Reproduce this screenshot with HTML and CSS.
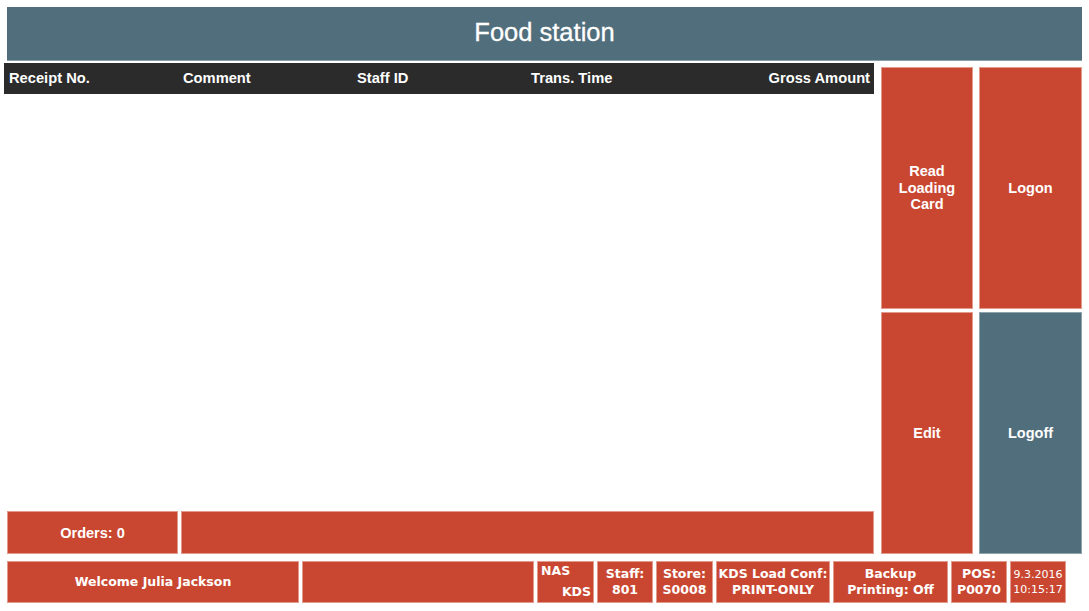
FILE: index.html
```html
<!DOCTYPE html>
<html>
<head>
<meta charset="utf-8">
<title>Food station</title>
<link rel="stylesheet" href="styles.css">
</head>
<body>
<div class="app">
  <header class="title-bar">Food station</header>
  <div class="main">
    <section class="left">
      <div class="table-head">
        <div class="col">Receipt No.</div>
        <div class="col">Comment</div>
        <div class="col">Staff ID</div>
        <div class="col">Trans. Time</div>
        <div class="col col-right">Gross Amount</div>
      </div>
      <div class="table-body"></div>
      <div class="orders-row">
        <div class="tile orders">Orders: 0</div>
        <div class="tile orders-bar"></div>
      </div>
    </section>
    <section class="actions">
      <div class="tile btn">Read<br>Loading<br>Card</div>
      <div class="tile btn">Logon</div>
      <div class="tile btn">Edit</div>
      <div class="tile btn blue">Logoff</div>
    </section>
  </div>
  <footer class="status">
    <div class="tile st w-welcome">Welcome Julia Jackson</div>
    <div class="tile st w-blank"></div>
    <div class="tile st w-nas"><span class="nas-top">NAS</span><span class="nas-bot">KDS</span></div>
    <div class="tile st w-56">Staff:<br>801</div>
    <div class="tile st w-57">Store:<br>S0008</div>
    <div class="tile st w-114">KDS Load Conf:<br>PRINT-ONLY</div>
    <div class="tile st w-115">Backup<br>Printing: Off</div>
    <div class="tile st w-56">POS:<br>P0070</div>
    <div class="tile st w-56 date">9.3.2016<br>10:15:17</div>
  </footer>
</div>
</body>
</html>
```

FILE: styles.css
```css
* { box-sizing: border-box; }
html, body {
  margin: 0;
  padding: 0;
  background: #ffffff;
  font-family: "Liberation Sans", Arial, sans-serif;
  color: #ffffff;
}
.app {
  width: 1089px;
  height: 611px;
  padding-top: 7px;
}
.title-bar {
  margin: 0 7px 0 7px;
  height: 54px;
  background: #516e7c;
  border-bottom: 1px solid #8aa0ab;
  display: flex;
  align-items: center;
  justify-content: center;
  font-size: 25.5px;
  font-weight: normal;
  -webkit-text-stroke: 0.3px #ffffff;
  padding-bottom: 3px;
}
.main {
  display: flex;
  margin-top: 2px;
  height: 491px;
}
.left {
  margin-left: 4px;
  width: 870px;
  display: flex;
  flex-direction: column;
}
.table-head {
  height: 31px;
  background: #2b2b2b;
  display: flex;
  align-items: center;
  font-size: 14.7px;
  font-weight: bold;
  padding-bottom: 1px;
}
.col {
  width: 174px;
  padding-left: 5px;
  white-space: nowrap;
}
.col-right {
  text-align: right;
  padding-left: 0;
  padding-right: 4px;
}
.table-body { flex: 1; }
.orders-row {
  display: flex;
  gap: 3px;
  padding-left: 3px;
  height: 43px;
}
.tile {
  background: #c94731;
  border: 1px solid #e29a8c;
}
.orders {
  width: 171px;
  display: flex;
  align-items: center;
  justify-content: center;
  font-size: 14.5px;
  font-weight: bold;
}
.orders-bar { flex: 1; }
.actions {
  margin-left: 7px;
  margin-top: 4px;
  width: 201px;
  display: grid;
  grid-template-columns: 92px 103px;
  grid-template-rows: 242px 242px;
  column-gap: 6px;
  row-gap: 3px;
}
.btn {
  display: flex;
  align-items: center;
  justify-content: center;
  text-align: center;
  font-size: 14.5px;
  font-weight: bold;
  line-height: 16.5px;
}
.btn.blue {
  background: #516e7c;
  border-color: #8fa3ad;
}
.status {
  display: flex;
  gap: 3px;
  margin: 7px 0 0 7px;
  height: 42px;
}
.st {
  display: flex;
  align-items: center;
  justify-content: center;
  text-align: center;
  font-family: "DejaVu Sans", Verdana, sans-serif;
  font-size: 12.5px;
  font-weight: bold;
  line-height: 16px;
  white-space: nowrap;
}
.w-welcome { width: 292px; }
.w-blank { width: 232px; }
.w-nas {
  width: 57px;
  flex-direction: column;
  align-items: stretch;
  justify-content: space-between;
  padding: 1px 2px 2px 3px;
}
.nas-top { text-align: left; }
.nas-bot { text-align: right; }
.w-56 { width: 56px; }
.w-57 { width: 57px; }
.w-114 { width: 114px; }
.w-115 { width: 115px; }
.date {
  font-weight: normal;
  font-size: 11px;
  line-height: 15px;
}
```
